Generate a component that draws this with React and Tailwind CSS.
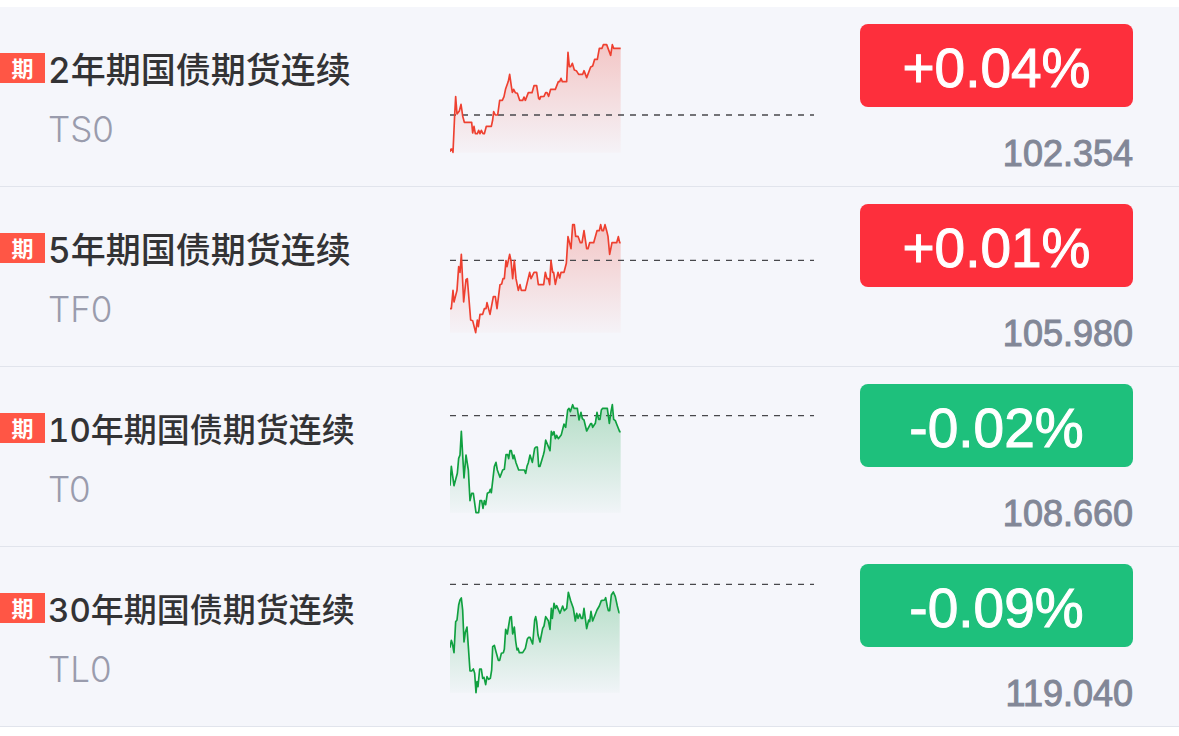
import clsx from 'clsx';

// Chart points are x,y pairs on a 1092 x 390 canvas, 368 is the floor
const CHART_WIDTH = 1092;
const CHART_HEIGHT = 390;
const CHART_FLOOR = 368;

const futures = [
  {
    code: 'TS0',
    name: '2年期国债期货连续',
    change: '+0.04%',
    price: '102.354',
    up: true,
    baseline: 255,
    points:
      '0,365 3,357 6,357 9,367 14,255 17,200 21,252 28,243 33,223 36,243 38,258 43,277 65,277 68,309 72,289 76,311 82,311 86,301 90,311 94,301 99,311 103,311 109,289 124,289 128,270 131,245 136,255 143,255 149,211 157,211 162,200 167,176 175,154 179,133 184,168 187,187 191,178 196,188 202,190 209,211 218,211 222,201 226,211 235,188 246,188 252,167 260,167 266,206 269,208 272,200 282,199 287,188 291,188 296,199 302,178 316,178 325,155 329,155 333,145 337,155 350,155 354,67 358,110 362,110 367,100 373,120 379,122 386,133 398,133 402,122 410,143 422,111 428,108 434,88 442,88 448,55 456,55 460,44 470,44 482,76 487,44 491,55 512,55',
  },
  {
    code: 'TF0',
    name: '5年期国债期货连续',
    change: '+0.01%',
    price: '105.980',
    up: true,
    baseline: 151,
    points:
      '0,296 4,296 9,241 12,276 21,241 26,170 30,187 34,133 41,276 48,209 52,206 62,330 68,332 77,368 82,330 85,350 90,313 98,313 103,296 108,296 111,278 120,313 130,260 136,260 141,296 150,224 155,222 159,206 163,206 168,152 171,170 179,133 183,152 188,206 193,152 198,206 205,241 210,224 214,241 226,241 239,187 243,206 252,187 260,187 265,224 281,224 286,187 291,206 295,206 299,224 303,152 308,187 311,187 316,223 324,187 329,204 333,187 342,187 349,160 354,80 363,116 368,44 373,44 377,79 384,79 391,98 396,98 402,62 410,116 414,116 419,98 431,98 441,62 448,62 452,44 456,62 460,62 465,44 470,62 474,79 479,133 486,98 500,98 505,80 509,98 512,98',
  },
  {
    code: 'T0',
    name: '10年期国债期货连续',
    change: '-0.02%',
    price: '108.660',
    up: false,
    baseline: 77,
    points:
      '0,287 4,229 12,287 22,250 26,205 30,195 34,124 42,264 48,195 55,240 60,332 65,310 70,310 78,368 86,368 90,332 95,332 99,355 103,332 107,344 112,310 118,307 121,298 124,308 133,230 138,217 142,240 150,262 158,240 163,238 168,194 173,194 176,206 180,182 184,182 189,206 192,195 198,218 206,240 223,240 227,250 231,229 235,218 240,195 247,217 254,175 258,171 262,171 266,229 270,229 280,195 283,183 287,150 300,182 304,124 308,135 312,125 316,146 320,136 325,146 334,134 342,102 347,112 353,60 357,55 361,65 368,44 372,55 382,55 387,90 393,67 397,86 402,90 410,123 422,101 425,101 428,112 436,100 441,67 446,88 450,88 454,60 458,55 472,55 478,100 483,65 487,44 491,88 496,92 501,105 509,125 512,125',
  },
  {
    code: 'TL0',
    name: '30年期国债期货连续',
    change: '-0.09%',
    price: '119.040',
    up: false,
    baseline: 43,
    points:
      '0,233 4,211 7,220 12,248 17,155 21,150 26,105 30,90 34,84 38,120 42,216 46,187 51,171 55,230 60,303 65,303 70,297 74,310 78,368 81,335 84,350 89,297 94,297 98,325 102,322 107,344 111,320 116,328 121,325 125,300 128,230 133,226 138,245 145,271 149,271 154,250 160,248 163,238 167,178 172,192 180,142 184,140 188,192 193,171 197,213 201,240 204,235 208,248 218,248 226,235 232,207 236,202 240,202 248,222 254,150 257,140 260,155 264,195 270,216 278,175 282,168 287,140 295,152 300,178 304,115 307,145 312,100 316,115 320,107 330,130 338,108 343,122 350,115 355,67 362,92 370,115 376,153 380,130 384,145 389,132 394,145 398,145 402,115 410,176 416,150 419,155 423,124 428,153 441,120 448,108 454,92 464,90 467,83 472,110 475,122 479,122 484,75 490,66 496,80 502,108 507,128 509,128',
  },
];

function TrendChart({ code, points, baseline, up }) {
  const gradientId = `fill-${code}`;
  const color = up ? '#ee4030' : '#10a040';
  const lastX = points.split(' ').pop().split(',')[0];

  return (
    <svg
      className="w-[364px] h-[130px] shrink-0"
      viewBox={`0 0 ${CHART_WIDTH} ${CHART_HEIGHT}`}
      fill="none"
      aria-hidden="true"
    >
      <defs>
        <linearGradient id={gradientId} x1="0" y1="0" x2="0" y2="1">
          <stop offset="0%" stopColor={color} stopOpacity={up ? 0.26 : 0.28} />
          <stop offset="100%" stopColor={color} stopOpacity="0.02" />
        </linearGradient>
      </defs>
      <polygon
        points={`0,${CHART_FLOOR} ${points} ${lastX},${CHART_FLOOR}`}
        fill={`url(#${gradientId})`}
      />
      <line
        x1="0"
        y1={baseline}
        x2={CHART_WIDTH}
        y2={baseline}
        stroke="#48484c"
        strokeWidth="4"
        strokeDasharray="18 18"
      />
      <polyline
        points={points}
        stroke={color}
        strokeWidth="5"
        strokeLinejoin="round"
      />
    </svg>
  );
}

function FutureRow({ item }) {
  const isLongName = item.name.startsWith('10') || item.name.startsWith('30');

  return (
    <li className="flex items-start h-[180px] border-b border-[#e1e4ec]">
      <div className="flex flex-1 min-w-0 items-start pt-[39px]">
        <span className="mt-[7px] flex h-[30px] w-[45px] shrink-0 items-center justify-center bg-[#ff5645] pt-[2px] text-[22px] leading-none font-bold text-white">
          期
        </span>
        <div className="pl-[3px] whitespace-nowrap">
          <h2
            className={clsx(
              'h-[48px] leading-[48px] font-medium tabular-nums text-[#333335]',
              isLongName ? 'text-[33px]' : 'text-[35px]'
            )}
          >
            {item.name}
          </h2>
          <p className="mt-[11px] text-[35px] leading-[48px] font-light text-[#9a9cad]">
            {item.code}
          </p>
        </div>
      </div>

      <div className="pt-[23px]">
        <TrendChart
          code={item.code}
          points={item.points}
          baseline={item.baseline}
          up={item.up}
        />
      </div>

      <div className="flex w-[365px] shrink-0 flex-col items-end pt-[17px] pr-[46px] font-['Liberation_Sans',sans-serif]">
        <span
          className={clsx(
            'flex h-[83px] w-[273px] items-center justify-center rounded-lg pt-[5px] text-[55px] leading-none text-white [-webkit-text-stroke:1px]',
            item.up ? 'bg-[#fd2f3c]' : 'bg-[#1ec07c]'
          )}
        >
          {item.change}
        </span>
        <span className="mt-[25px] text-[36px] leading-[44px] text-[#828797] [-webkit-text-stroke:1px]">
          {item.price}
        </span>
      </div>
    </li>
  );
}

export default function App() {
  return (
    <main className="bg-white pt-[7px] font-[Inter,'Noto_Sans_CJK_SC',sans-serif]">
      <ul className="bg-[#f5f6fb]">
        {futures.map((item) => (
          <FutureRow key={item.code} item={item} />
        ))}
      </ul>
    </main>
  );
}
